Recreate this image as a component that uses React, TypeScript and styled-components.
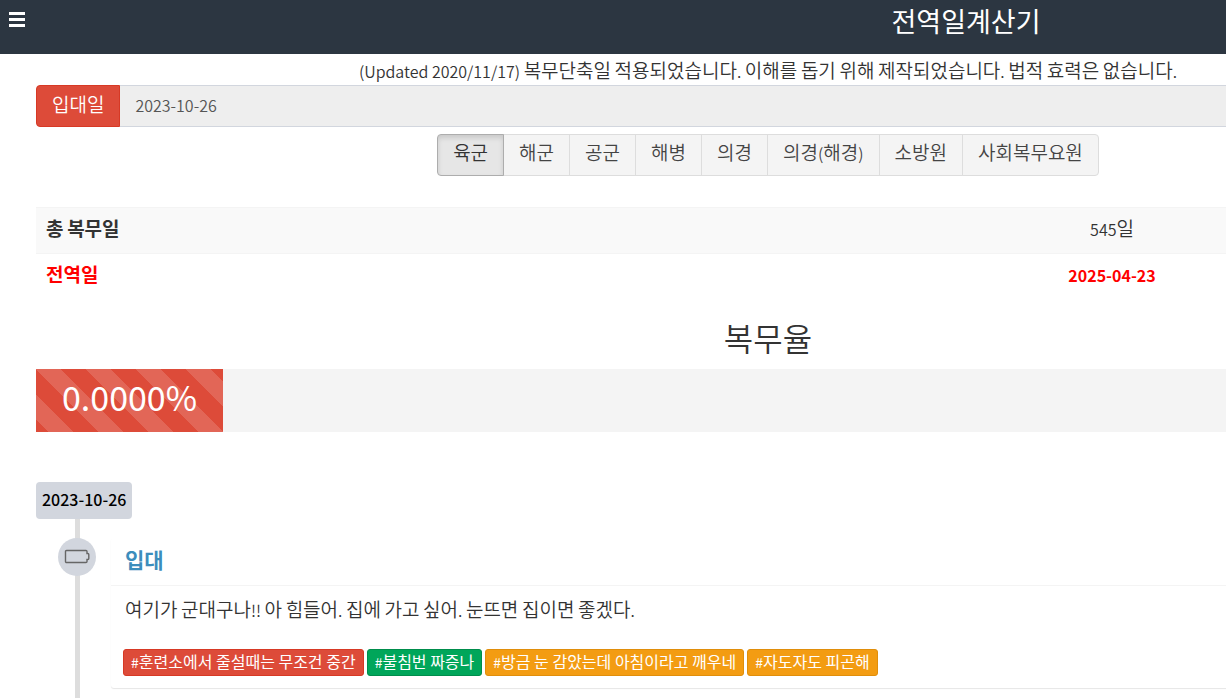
import React, { useState } from "react";
import styled, { createGlobalStyle } from "styled-components";

const GlobalStyle = createGlobalStyle`
  * { box-sizing: border-box; }
  body {
    margin: 0;
    overflow-x: hidden;
    background: #fff;
    color: #333;
    font-family: "Noto Sans CJK KR", "Noto Sans", sans-serif;
    font-size: 19px;
    font-weight: 350;
    line-height: 27px;
  }
  button, input { font: inherit; }
`;

const Page = styled.div`
  min-width: 1536px;
`;

const Header = styled.header`
  display: flex;
  align-items: flex-start;
  height: 54px;
  background: #2c3641;
  color: #fff;
`;

const HeaderSide = styled.div`
  flex: 0 0 396px;
  padding: 12px 8px;
`;

const MenuButton = styled.button`
  display: block;
  padding: 0;
  border: 0;
  background: none;
  color: #fff;
  svg { display: block; }
`;

const Title = styled.h1`
  flex: 1;
  margin: 0;
  font-size: 27px;
  font-weight: 400;
  line-height: 42px;
  text-align: center;
`;

const Main = styled.main`
  padding: 0 36px;
`;

const Notice = styled.p`
  margin: 0;
  padding: 2px 0;
  text-align: center;
`;

const Latin = styled.span`
  font-size: 16px;
  line-height: 16px;
`;

const DateField = styled.div`
  display: flex;
  height: 42px;
`;

const DateLabel = styled.label`
  padding: 4px 15px;
  border: 1px solid #d73925;
  border-radius: 4px 0 0 4px;
  background: #dd4b39;
  color: #fff;
`;

const DateInput = styled.input`
  flex: 1;
  min-width: 0;
  padding: 0 15px 2px;
  border: 1px solid #d2d6de;
  border-left: 0;
  border-radius: 0;
  background: #eee;
  color: #555;
  font-size: 16px;
  outline: none;
`;

const BranchGroup = styled.div`
  display: flex;
  justify-content: center;
  margin: 7px 0 31px;
`;

const BranchButton = styled.button<{ $active: boolean }>`
  position: relative;
  z-index: ${(p) => (p.$active ? 1 : 0)};
  height: 42px;
  padding: 0 15px 8px;
  border: 1px solid ${(p) => (p.$active ? "#adadad" : "#ddd")};
  background: ${(p) => (p.$active ? "#e6e6e6" : "#f4f4f4")};
  box-shadow: ${(p) => (p.$active ? "inset 0 3px 5px rgba(0, 0, 0, 0.125)" : "none")};
  color: ${(p) => (p.$active ? "#333" : "#444")};
  & + & { margin-left: -1px; }
  &:first-child { border-radius: 4px 0 0 4px; }
  &:last-child { border-radius: 0 4px 4px 0; }
`;

const Summary = styled.table`
  width: 100%;
  border-collapse: collapse;
  table-layout: fixed;
`;

const SummaryRow = styled.tr<{ $striped?: boolean; $alert?: boolean }>`
  background: ${(p) => (p.$striped ? "#f9f9f9" : "#fff")};
  color: ${(p) => (p.$alert ? "red" : "#333")};
  font-weight: ${(p) => (p.$alert ? 700 : 350)};
  th, td {
    height: 46px;
    padding: 0 10px 6px;
    border-top: 1px solid #f4f4f4;
  }
  th { width: 47%; text-align: left; font-weight: 700; }
  td { text-align: center; }
`;

const RateTitle = styled.h2`
  margin: 16px 0 11px;
  font-size: 32px;
  font-weight: 350;
  line-height: 42px;
  text-align: center;
`;

const Progress = styled.div`
  height: 63px;
  background: #f4f4f4;
`;

const ProgressBar = styled.div`
  width: 187px;
  height: 100%;
  background-color: #dd4b39;
  background-image: linear-gradient(
    45deg,
    rgba(255, 255, 255, 0.15) 25%,
    transparent 25%,
    transparent 50%,
    rgba(255, 255, 255, 0.15) 50%,
    rgba(255, 255, 255, 0.15) 75%,
    transparent 75%
  );
  background-size: 50px 50px;
  color: #fff;
  font-size: 34px;
  font-weight: 400;
  line-height: 56px;
  text-align: center;
`;

const Timeline = styled.ol`
  position: relative;
  margin: 50px 0 0;
  padding: 0 0 30px;
  list-style: none;
  &::before {
    content: "";
    position: absolute;
    top: 0;
    bottom: 0;
    left: 39px;
    width: 5px;
    background: #ddd;
  }
`;

const TimelineDate = styled.li`
  position: relative;
  width: max-content;
  padding: 4px 6px 6px;
  border-radius: 4px;
  background: #d2d6de;
  color: #000;
  font-size: 16px;
  font-weight: 500;
`;

const TimelineItem = styled.li`
  position: relative;
  display: flex;
  gap: 15px;
  margin-top: 19px;
  padding-left: 22px;
`;

const TimelineIcon = styled.div`
  display: flex;
  flex: 0 0 38px;
  align-items: center;
  justify-content: center;
  height: 38px;
  border-radius: 50%;
  background: #d2d6de;
`;

const Card = styled.article`
  flex: 1;
  border-radius: 3px;
  background: #fff;
  box-shadow: 0 1px 1px rgba(0, 0, 0, 0.1);
`;

const CardTitle = styled.h3`
  margin: 0;
  padding: 8px 14px 12px;
  border-bottom: 1px solid #f4f4f4;
  font-size: 21px;
  font-weight: 700;
  a { color: #3c8dbc; text-decoration: none; }
`;

const CardText = styled.p`
  margin: 0;
  padding: 9px 14px 0;
`;

const Tags = styled.div`
  display: flex;
  gap: 3px;
  padding: 27px 12px 12px;
`;

const tones = {
  red: ["#dd4b39", "#d73925"],
  green: ["#00a65a", "#008d4c"],
  orange: ["#f39c12", "#e08e0b"],
};

const Tag = styled.button<{ $tone: keyof typeof tones }>`
  height: 27px;
  padding: 0 7px 3px;
  border: 1px solid ${(p) => tones[p.$tone][1]};
  border-radius: 3px;
  background: ${(p) => tones[p.$tone][0]};
  color: #fff;
  font-size: 16px;
  font-weight: 400;
  line-height: 22px;
  white-space: nowrap;
`;

const Hash = styled.span`
  font-size: 14px;
  line-height: 14px;
`;

/* Hangul keeps the parent's size; Latin letters, digits, spaces and punctuation are set smaller. */
function Mixed({ text }: { text: string }) {
  return (
    <>
      {text.split(/([^가-힣]+)/).map((run, i) => (i % 2 ? <Latin key={i}>{run}</Latin> : run))}
    </>
  );
}

const branches = ["육군", "해군", "공군", "해병", "의경", "의경(해경)", "소방원", "사회복무요원"];

const tags: { text: string; tone: keyof typeof tones }[] = [
  { text: "훈련소에서 줄설때는 무조건 중간", tone: "red" },
  { text: "불침번 짜증나", tone: "green" },
  { text: "방금 눈 감았는데 아침이라고 깨우네", tone: "orange" },
  { text: "자도자도 피곤해", tone: "orange" },
];

export default function App() {
  const [branch, setBranch] = useState(branches[0]);

  return (
    <>
      <GlobalStyle />
      <Page>
        <Header>
          <HeaderSide>
            <MenuButton type="button" aria-label="메뉴">
              <svg width="18" height="15" viewBox="0 0 18 15" fill="currentColor">
                <path d="M1 0h16v3H1zM1 6h16v3H1zM1 12h16v3H1z" />
              </svg>
            </MenuButton>
          </HeaderSide>
          <Title>전역일계산기</Title>
        </Header>

        <Main>
          <Notice>
            <Mixed text="(Updated 2020/11/17) 복무단축일 적용되었습니다. 이해를 돕기 위해 제작되었습니다. 법적 효력은 없습니다." />
          </Notice>

          <DateField>
            <DateLabel htmlFor="enlist-date">입대일</DateLabel>
            <DateInput id="enlist-date" type="text" readOnly value="2023-10-26" />
          </DateField>

          <BranchGroup role="group">
            {branches.map((name) => (
              <BranchButton
                key={name}
                type="button"
                $active={name === branch}
                aria-pressed={name === branch}
                onClick={() => setBranch(name)}
              >
                <Mixed text={name} />
              </BranchButton>
            ))}
          </BranchGroup>

          <Summary>
            <tbody>
              <SummaryRow $striped>
                <th scope="row">
                  <Mixed text="총 복무일" />
                </th>
                <td>
                  <Mixed text="545일" />
                </td>
              </SummaryRow>
              <SummaryRow $alert>
                <th scope="row">전역일</th>
                <td>
                  <Mixed text="2025-04-23" />
                </td>
              </SummaryRow>
            </tbody>
          </Summary>

          <RateTitle>복무율</RateTitle>
          <Progress>
            <ProgressBar role="progressbar" aria-valuenow={0} aria-valuemin={0} aria-valuemax={100}>
              0.0000%
            </ProgressBar>
          </Progress>

          <Timeline>
            <TimelineDate>2023-10-26</TimelineDate>
            <TimelineItem>
              <TimelineIcon>
                <svg width="26" height="16" viewBox="0 0 26 16" fill="none" stroke="#666" strokeWidth="1.4">
                  <path d="M2.500 1.500h19.500a1 1 0 0 1 1 1V4.500h.8a1 1 0 0 1 1 1v4a1 1 0 0 1-1 1H23v2a1 1 0 0 1-1 1H2.500a1 1 0 0 1-1-1v-10a1 1 0 0 1 1-1z" />
                </svg>
              </TimelineIcon>
              <Card>
                <CardTitle>
                  <a href="#enlist">입대</a>
                </CardTitle>
                <CardText>
                  <Mixed text="여기가 군대구나!! 아 힘들어. 집에 가고 싶어. 눈뜨면 집이면 좋겠다." />
                </CardText>
                <Tags>
                  {tags.map((tag) => (
                    <Tag key={tag.text} type="button" $tone={tag.tone}>
                      <Hash>#</Hash>
                      {tag.text}
                    </Tag>
                  ))}
                </Tags>
              </Card>
            </TimelineItem>
          </Timeline>
        </Main>
      </Page>
    </>
  );
}
